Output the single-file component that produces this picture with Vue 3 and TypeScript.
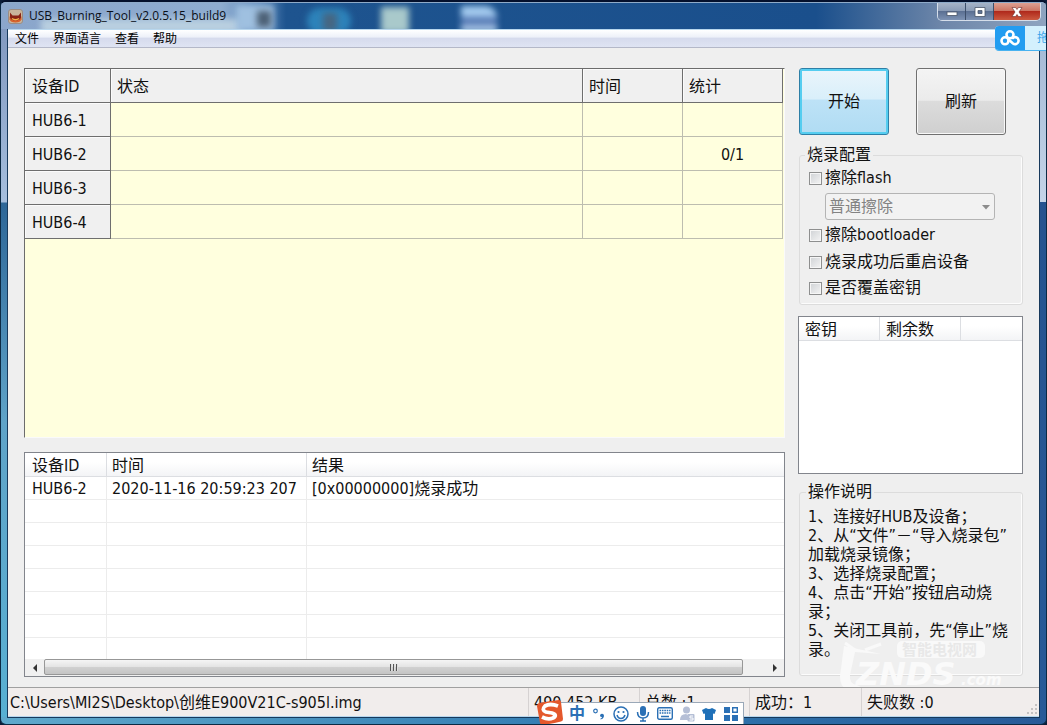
<script setup lang="ts">
import { ref } from 'vue'

const menus = ['文件', '界面语言', '查看', '帮助']

const devices = [
  { id: 'HUB6-1', status: '', time: '', stat: '' },
  { id: 'HUB6-2', status: '', time: '', stat: '0/1' },
  { id: 'HUB6-3', status: '', time: '', stat: '' },
  { id: 'HUB6-4', status: '', time: '', stat: '' },
]

const logs = [
  { id: 'HUB6-2', time: '2020-11-16 20:59:23 207', result: '[0x00000000]烧录成功' },
]
const emptyLogRows = 7

const eraseFlash = ref(false)
const eraseMode = ref('normal')
const eraseBootloader = ref(false)
const rebootAfter = ref(false)
const overwriteKey = ref(false)

const steps = [
  '1、连接好HUB及设备；',
  '2、从“文件”－“导入烧录包”\n加载烧录镜像；',
  '3、选择烧录配置；',
  '4、点击“开始”按钮启动烧\n录；',
  '5、关闭工具前，先“停止”烧\n录。',
]
</script>

<template>
  <div class="window">
    <header class="titlebar">
      <div class="backdrop" aria-hidden="true">
        <i class="blob b1"></i><i class="blob b2"></i><i class="blob b3"></i>
        <i class="blob b4"></i><i class="blob b5"></i><i class="blob b6"></i><i class="blob b7"></i>
      </div>
      <svg class="app-icon" viewBox="0 0 15 15" aria-hidden="true">
        <rect x="0.5" y="0.5" width="14" height="14" rx="2.500" fill="#c9b59c" stroke="#9a8c84" />
        <path d="M1.500 7.500h12v3q-1 3-6 3t-6-3z" fill="#d8622c" />
        <path d="M2 3.500l2.500 3h6l2.500-3v5q-1 3-5.500 3T2 8.500z" fill="#8a2416" />
        <path d="M4 9.500q3.500 2.500 7 0" stroke="#f5b64c" stroke-width="1.500" fill="none" />
      </svg>
      <h1>USB_Burning_Tool_v2.0.5.15_build9</h1>
      <div class="win-buttons">
        <button type="button" aria-label="最小化">
          <svg viewBox="0 0 14 12" width="14" height="12"><rect x="2" y="6" width="10" height="3.500" fill="#fff" stroke="#4a5568" stroke-width="0.800" /></svg>
        </button>
        <button type="button" aria-label="最大化">
          <svg viewBox="0 0 14 12" width="14" height="12"><path d="M2 1.500h10v9H2zM5 4.500v3h4v-3z" fill="#fff" fill-rule="evenodd" stroke="#4a5568" stroke-width="0.800" /></svg>
        </button>
        <button type="button" class="close" aria-label="关闭">
          <svg viewBox="0 0 14 12" width="14" height="12"><path d="M2 1.500h3.600L7 3.500l1.400-2H12L9 6l3 4.500H8.400L7 8.500l-1.400 2H2L5 6z" fill="#fff" stroke="#6b2a2a" stroke-width="0.600" /></svg>
        </button>
      </div>
    </header>

    <div class="client">
      <nav class="menubar">
        <button v-for="m in menus" :key="m" type="button">{{ m }}</button>
      </nav>

      <main class="content">
        <section class="left">
          <div class="device-pane">
            <table class="devices">
              <colgroup><col class="c-id" /><col /><col class="c-100" /><col class="c-100" /></colgroup>
              <thead>
                <tr><th>设备ID</th><th>状态</th><th>时间</th><th>统计</th></tr>
              </thead>
              <tbody>
                <tr v-for="d in devices" :key="d.id">
                  <th scope="row">{{ d.id }}</th>
                  <td>{{ d.status }}</td>
                  <td>{{ d.time }}</td>
                  <td class="stat">{{ d.stat }}</td>
                </tr>
              </tbody>
            </table>
          </div>

          <div class="log-pane">
            <table class="log">
              <colgroup><col class="l-id" /><col class="l-time" /><col /></colgroup>
              <thead>
                <tr><th>设备ID</th><th>时间</th><th>结果</th></tr>
              </thead>
              <tbody>
                <tr v-for="l in logs" :key="l.time"><td>{{ l.id }}</td><td>{{ l.time }}</td><td>{{ l.result }}</td></tr>
                <tr v-for="n in emptyLogRows" :key="n"><td></td><td></td><td></td></tr>
              </tbody>
            </table>
            <div class="scrollbar">
              <button type="button" aria-label="向左滚动"><svg viewBox="0 0 6 8" width="6" height="8"><path d="M5 0v8L1 4z" fill="#333" /></svg></button>
              <div class="track"><div class="thumb"><i></i><i></i><i></i></div></div>
              <button type="button" aria-label="向右滚动"><svg viewBox="0 0 6 8" width="6" height="8"><path d="M1 0v8l4-4z" fill="#333" /></svg></button>
            </div>
          </div>
        </section>

        <aside class="right">
          <div class="actions">
            <button type="button" class="primary">开始</button>
            <button type="button">刷新</button>
          </div>

          <fieldset class="config">
            <legend>烧录配置</legend>
            <label><input v-model="eraseFlash" type="checkbox" />擦除flash</label>
            <div class="combo">
              <select v-model="eraseMode" disabled aria-label="擦除方式">
                <option value="normal">普通擦除</option>
              </select>
              <svg viewBox="0 0 8 5" width="8" height="5" aria-hidden="true"><path d="M0 0h8L4 4.500z" fill="#8c8c8c" /></svg>
            </div>
            <label><input v-model="eraseBootloader" type="checkbox" />擦除bootloader</label>
            <label><input v-model="rebootAfter" type="checkbox" />烧录成功后重启设备</label>
            <label><input v-model="overwriteKey" type="checkbox" />是否覆盖密钥</label>
          </fieldset>

          <div class="keys-pane">
            <table class="keys">
              <colgroup><col class="k-80" /><col class="k-80" /><col /></colgroup>
              <thead><tr><th>密钥</th><th>剩余数</th><td></td></tr></thead>
            </table>
          </div>

          <fieldset class="help">
            <legend>操作说明</legend>
            <p v-for="s in steps" :key="s">{{ s }}</p>
            <svg class="watermark" viewBox="0 0 170 58" aria-hidden="true">
              <path d="M7 6L3 36q0 14 12 15l20 2-15-8q-8-1-7-10L18 12l26 2z" fill="#f9f9f9" />
              <path d="M18 10L8 3M28 10L44 4" stroke="#f9f9f9" stroke-width="3" />
              <rect x="60" y="1" width="88" height="17" rx="5" fill="#f9f9f9" />
              <text x="65" y="15" class="wm-cn">智能电视网</text>
              <text x="19" y="45" class="wm-en">ZNDS</text>
              <text x="124" y="45" class="wm-com">.com</text>
            </svg>
          </fieldset>
        </aside>
      </main>

      <footer class="statusbar">
        <span class="path">C:\Users\MI2S\Desktop\创维E900V21C-s905l.img</span>
        <span>490,452 KB</span>
        <span>总数 :1</span>
        <span>成功：1</span>
        <span>失败数 :0</span>
        <svg class="grip" viewBox="0 0 12 12" width="12" height="12" aria-hidden="true">
          <path d="M9 1h2v2H9zM9 5h2v2H9zM5 5h2v2H5zM9 9h2v2H9zM5 9h2v2H5zM1 9h2v2H1z" fill="#c4c2c2" />
        </svg>
      </footer>
    </div>

    <div class="cloud">
      <span class="cloud-logo">
        <svg viewBox="0 0 20 16" width="20" height="16" aria-hidden="true">
          <g fill="none" stroke="#fff" stroke-width="2.600"><circle cx="10" cy="4.800" r="3.500" /><circle cx="5" cy="10.800" r="3.500" /><path d="M8 9l5 4.500a3.500 3.500 0 1 0-1-4.500" /></g>
        </svg>
      </span>
      <span class="cloud-text">拖</span>
    </div>

    <div class="ime" role="toolbar" aria-label="输入法">
      <svg class="sogou" viewBox="0 0 28 26" width="28" height="26" aria-hidden="true">
        <path d="M3 4Q14 2 23 1q2 0 2 2l2 17q0 2-2 2.500Q14 25 7 26q-2 0-3-2L1 7q0-2 2-3z" fill="#e4582c" />
        <path d="M22 7Q14 4 9 7q-4 4 1 6l6 1q6 2 1 5-5 2-11-1" fill="none" stroke="#fff" stroke-width="3.800" />
      </svg>
      <button type="button" class="zh">中</button>
      <button type="button" aria-label="标点"><svg viewBox="0 0 14 14" width="14" height="14"><circle cx="3.500" cy="4" r="1.800" fill="none" stroke="#2b70b5" stroke-width="1.200" /><path d="M8 8.500a2 2 0 1 1 4 .5q-.5 3-3.500 3.500v-1q1.500-.5 1.500-1.500-2 0-2-1.500z" fill="#2b70b5" /></svg></button>
      <button type="button" aria-label="表情"><svg viewBox="0 0 16 16" width="16" height="16"><g fill="none" stroke="#2b70b5" stroke-width="1.500"><circle cx="8" cy="8" r="7" /><path d="M4 9q1 3.500 4 3.500T12 9" /></g><circle cx="5.500" cy="6" r="1.100" fill="#2b70b5" /><circle cx="10.500" cy="6" r="1.100" fill="#2b70b5" /></svg></button>
      <button type="button" aria-label="语音"><svg viewBox="0 0 14 16" width="14" height="16"><rect x="4" y="0" width="6" height="10" rx="3" fill="#2b70b5" /><path d="M1.500 6q0 6 5.500 6t5.500-6M7 12v3M4 15h6" fill="none" stroke="#2b70b5" stroke-width="1.500" /></svg></button>
      <button type="button" aria-label="键盘"><svg viewBox="0 0 16 13" width="16" height="13"><rect x="0.700" y="0.700" width="14.600" height="11.600" rx="1.500" fill="none" stroke="#2b70b5" stroke-width="1.400" /><path d="M2.500 3.500h11M2.500 6h11" stroke="#2b70b5" stroke-width="1.500" stroke-dasharray="1.600 0.800" /><path d="M4 9.500h8" stroke="#2b70b5" stroke-width="1.500" /></svg></button>
      <button type="button" aria-label="账户"><svg viewBox="0 0 15 16" width="15" height="16"><g fill="#b5bfd6"><circle cx="6.500" cy="4" r="3.500" /><path d="M0 14q0-6 6-6l2 1v5z" /><rect x="7.500" y="8" width="7" height="7.500" rx="1" /></g><path d="M13 10h-3v2h3v2h-3.500" fill="none" stroke="#fff" /></svg></button>
      <button type="button" aria-label="皮肤"><svg viewBox="0 0 14 14" width="14" height="14"><path d="M4 1q3 2 6 0l4 2-1.500 4-1.500-.5V13H3V6.500L1.500 7 0 3z" fill="#1f70b8" /></svg></button>
      <button type="button" aria-label="工具箱"><svg viewBox="0 0 14 14" width="14" height="14"><path d="M0 0h6v6H0zM0 8h6v6H0zM8 8h6v6H8z" fill="#2b70b5" /><path d="M8.700.7h4.600v4.600H8.700z" fill="none" stroke="#2b70b5" stroke-width="1.400" /></svg></button>
    </div>
  </div>
</template>

<style>
body {
  margin: 0;
  background: #0b1c38;
}
</style>

<style scoped>
* {
  box-sizing: border-box;
}
button {
  font: inherit;
  color: inherit;
  border: 0;
  padding: 0;
  background: none;
}
.window {
  position: relative;
  display: flex;
  flex-direction: column;
  min-height: 100vh;
  padding: 0 7px 7px;
  overflow: hidden;
  font: 16px/20px "DejaVu Sans Condensed", "Noto Sans CJK SC", sans-serif;
  color: #111;
  border: 1px solid #0c2a44;
  border-top: 2px solid #04102c;
  border-radius: 6px;
  background:
    linear-gradient(#9db4d2, #c4d4e8 100%) right top / 7px 200px no-repeat,
    linear-gradient(90deg, #5fa9cc, #2f78b0 60%, #285a98) left bottom / 100% 7px no-repeat,
    linear-gradient(#7c93bb, #a5bedd 200px, #2d6697 201px, #5fa3c8 420px, #58b0d3) left top / 7px 100% no-repeat,
    linear-gradient(#24508c, #285a98);
}
.titlebar {
  position: relative;
  display: flex;
  align-items: center;
  height: 27px;
  margin: 0 -7px;
  padding-left: 7px;
  border-top: 1px solid #8fabc9;
  background: linear-gradient(90deg, #8ba6cb, #8eacd0 220px, #5b87b8 260px, #1e548f 285px, #1a4f8c 78%, #6d86a9 90%, #8ea4c0);
}
.backdrop {
  position: absolute;
  inset: 0;
  overflow: hidden;
}
.blob {
  position: absolute;
  filter: blur(3px);
}
.b1 { left: 40px; top: 16px; width: 200px; height: 14px; background: #b9cfe0; }
.b2 { left: 235px; top: 2px; width: 38px; height: 26px; background: #9fc0e0; }
.b3 { left: 256px; top: 8px; width: 14px; height: 16px; background: #4c6075; }
.b4 { left: 306px; top: 5px; width: 44px; height: 26px; border-radius: 14px; background: #2d83ba; }
.b5 { left: 322px; top: 10px; width: 14px; height: 18px; background: #466682; }
.b6 { left: 380px; top: 4px; width: 28px; height: 26px; background: #a9c9cb; }
.b7 { left: 460px; top: 3px; width: 36px; height: 26px; border-radius: 0 12px 0 0; background: linear-gradient(#a5ccf0 40%, #5b7fb8 41%, #5b7fb8 75%, #b8d3ee 76%); }
.app-icon {
  position: relative;
  width: 15px;
  height: 15px;
}
h1 {
  position: relative;
  margin: 0 0 0 6px;
  font: 12px/20px "Open Sans", "Noto Sans", sans-serif;
  color: #0a0f18;
}
.win-buttons {
  position: relative;
  display: flex;
  align-self: flex-start;
  margin-left: auto;
  margin-right: 5px;
  height: 18px;
  border: 1px solid #d5deea;
  border-top: 0;
  border-radius: 0 0 5px 5px;
  overflow: hidden;
}
.win-buttons button {
  display: flex;
  align-items: center;
  justify-content: center;
  width: 28px;
  border-right: 1px solid #3d4f6b;
  background: linear-gradient(#a6b3c7, #8b9cb6 45%, #5b7093 50%, #7d92b3);
}
.win-buttons .close {
  width: 46px;
  border-right: 0;
  background: linear-gradient(#dda092, #cd7563 45%, #b02a1c 50%, #cc5a40);
}
.client {
  flex: 1;
  display: flex;
  flex-direction: column;
  border: 1px solid #b8d7ee;
  border-width: 1px 0;
  outline: 1px solid #17395c;
  background: #efefef;
}
.menubar {
  display: flex;
  gap: 14px;
  height: 18px;
  padding-left: 7px;
  border-bottom: 1px solid #b4b8c8;
  background: linear-gradient(#fff, #eef1f9 40%, #d6dbed 50%, #dfe4f3);
  font-size: 12px;
  line-height: 18px;
  color: #000;
}
.content {
  flex: 1;
  display: flex;
  gap: 13px;
  padding: 20px 16px 10px;
}
.left {
  flex: 1;
  min-width: 0;
  display: flex;
  flex-direction: column;
  gap: 14px;
}
table {
  width: 100%;
  table-layout: fixed;
  border-collapse: separate;
  border-spacing: 0;
}
th {
  font-weight: 400;
  text-align: left;
}
th, td {
  overflow: hidden;
  white-space: nowrap;
}
.device-pane {
  flex: 1;
  padding-right: 1px;
  border: 1px solid #6c6c6c;
  border-right-color: #fafafa;
  border-bottom-color: #fafafa;
  background: #ffffde;
}
.c-id { width: 86px; }
.c-100 { width: 100px; }
.devices th, .devices td {
  height: 34px;
  padding: 2px 7px 0;
  border-right: 1px solid #bdbdaf;
  border-bottom: 1px solid #bdbdaf;
}
.devices th {
  background: #f0f0f0;
  border-color: #6e6e6e;
  box-shadow: inset 1px 1px #fbfbfb;
}
.devices thead th {
  padding-left: 6px;
}
.devices th:first-child {
  padding-left: 7px;
}
.devices .stat {
  text-align: center;
}
.log-pane {
  border: 1px solid #82858c;
  background: #fff;
}
.l-id { width: 82px; }
.l-time { width: 200px; }
.log th, .log td {
  height: 23px;
  padding: 2px 5px 0;
  border-right: 1px solid #ececec;
  border-bottom: 1px solid #ececec;
}
.log th:first-child, .log td:first-child {
  padding-left: 7px;
}
.log th {
  height: 24px;
  background: linear-gradient(#fff 40%, #f3f4f6);
  border-color: #dcdee2;
}
.log th:last-child, .log td:last-child {
  border-right: 0;
}
.log tbody tr:last-child td {
  height: 21px;
  border-bottom: 0;
}
.scrollbar {
  display: flex;
  height: 17px;
  background: #f0f0f0;
}
.scrollbar button {
  display: flex;
  align-items: center;
  justify-content: center;
  width: 19px;
}
.track {
  flex: 1;
}
.thumb {
  display: flex;
  align-items: center;
  justify-content: center;
  gap: 1px;
  width: 97%;
  height: 16px;
  border: 1px solid #979797;
  border-radius: 2px;
  background: linear-gradient(#f5f5f5, #e4e4e4 48%, #d0d0d0 52%, #c4c4c4);
}
.thumb i {
  width: 2px;
  height: 7px;
  background: #555;
  border-right: 1px solid #ddd;
}
.right {
  width: 225px;
  display: flex;
  flex-direction: column;
}
.actions {
  display: flex;
  gap: 27px;
  padding-left: 1px;
}
.actions button {
  width: 90px;
  height: 67px;
  border: 1px solid #707070;
  border-radius: 3px;
  background: linear-gradient(#f4f4f4, #ebebeb 48%, #dcdcdc 50%, #cfcfcf);
  box-shadow: inset 0 0 0 1px #f8f8f8;
}
.actions .primary {
  border-color: #2e7fa6;
  background: linear-gradient(#eaf5fb, #d9effa 46%, #bde2f7 48%, #b0dcf3);
  box-shadow: inset 0 0 0 2px #55cdf0;
}
fieldset {
  position: relative;
  z-index: 0;
  min-width: 0;
  margin: 0 0 0 1px;
  border: 1px solid #dcdcdc;
  border-radius: 3px;
  box-shadow: inset -1px -1px #fcfcfc;
}
legend {
  margin-left: 4px;
  padding: 0 2px;
  height: 20px;
}
.config {
  display: flex;
  flex-direction: column;
  margin-top: 10px;
  padding: 2px 1px 5px;
}
.config label {
  display: flex;
  align-items: center;
  gap: 3px;
  height: 22px;
  margin: 0 0 4px 8px;
}
.config label:nth-of-type(2) {
  margin-bottom: 5px;
}
.config label:last-child {
  margin-bottom: 0;
}
input[type="checkbox"] {
  appearance: none;
  width: 13px;
  height: 13px;
  margin: 0;
  border: 1px solid #8e8f8f;
  background: linear-gradient(135deg, #cfd2d5, #f4f4f4);
  box-shadow: inset 0 0 0 1px #f6f6f6;
}
.combo {
  position: relative;
  width: 170px;
  margin: 0 0 4px 24px;
}
.combo select {
  display: block;
  width: 100%;
  height: 27px;
  padding: 0 3px;
  appearance: none;
  font: inherit;
  color: #838383;
  opacity: 1;
  border: 1px solid #b4b4b4;
  border-radius: 3px;
  background: #f2f2f2;
}
.combo svg {
  position: absolute;
  right: 5px;
  top: 12px;
}
.keys-pane {
  height: 158px;
  margin-top: 11px;
  border: 1px solid #82858c;
  background: #fff;
}
.k-80 { width: 81px; }
.keys th, .keys td {
  height: 24px;
  padding: 2px 6px 0;
  border-right: 1px solid #dcdee2;
  border-bottom: 1px solid #dcdee2;
  background: linear-gradient(#fff 40%, #f3f4f6);
}
.keys td {
  border-right: 0;
}
.help {
  flex: 1;
  margin-top: 8px;
  margin-bottom: 1px;
  padding: 5px 2px 0 8px;
}
.help legend {
  margin-left: -2px;
}
.help p {
  margin: 0;
  line-height: 19px;
  white-space: pre-line;
}
.watermark {
  position: absolute;
  z-index: -1;
  left: 37px;
  bottom: -23px;
  width: 170px;
  height: 58px;
}
.wm-cn {
  font: 700 15px "Noto Sans CJK SC", sans-serif;
  fill: #e8e8e8;
}
.wm-en {
  font: italic 700 32px "DejaVu Sans", sans-serif;
  fill: #fafafa;
}
.wm-com {
  font: italic 700 15px "DejaVu Sans", sans-serif;
  fill: #fafafa;
}
.statusbar {
  position: relative;
  display: grid;
  grid-template-columns: 1fr 111px 110px 112px 178px;
  height: 29px;
  border-top: 1px solid #a0a0a0;
  background: #f1edec;
  line-height: 30px;
}
.statusbar span {
  padding-left: 5px;
  white-space: nowrap;
  overflow: hidden;
  border-left: 1px solid #d6d2d2;
}
.statusbar .path {
  padding-left: 2px;
  border-left: 0;
}
.grip {
  position: absolute;
  right: 1px;
  bottom: 1px;
}
.cloud {
  position: absolute;
  top: 24px;
  right: -1px;
  display: flex;
  width: 52px;
  height: 25px;
  overflow: hidden;
  border-radius: 4px 0 0 4px;
  background: #d3f0fd;
  border-bottom: 1px solid #48b2f0;
}
.cloud-logo {
  display: flex;
  flex: none;
  align-items: center;
  justify-content: center;
  width: 30px;
  background: #229cf0;
}
.cloud-text {
  flex: none;
  padding-left: 12px;
  font-size: 12px;
  line-height: 24px;
  color: #3aa4ea;
}
.ime {
  position: absolute;
  left: 540px;
  bottom: -1px;
  display: flex;
  align-items: center;
  gap: 6px;
  height: 23px;
  padding: 0 4px 0 27px;
  border: 1px solid #9aa8b8;
  background: #fff;
}
.ime button {
  display: flex;
  align-items: center;
  justify-content: center;
  min-width: 16px;
}
.ime .zh {
  font-weight: 700;
  color: #2b70b5;
}
.sogou {
  position: absolute;
  left: -6px;
  top: -4px;
}
</style>
